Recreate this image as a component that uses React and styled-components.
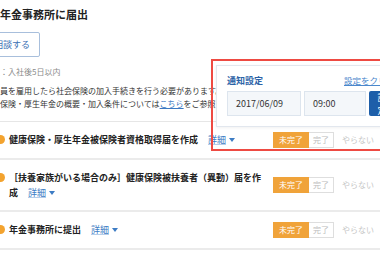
import React from "react";
import styled, { createGlobalStyle } from "styled-components";

const GlobalStyle = createGlobalStyle`
	html, body {
		margin: 0;
		padding: 0;
		width: 380px;
		height: 254px;
		overflow: hidden;
		background: #fff;
	}
	body {
		font-family: "Noto Sans CJK JP", "Noto Sans", sans-serif;
		color: #222;
	}
`;

const tasks = [
	{ id: 1, title: "健康保険・厚生年金被保険者資格取得届を作成" },
	{ id: 2, title: "［扶養家族がいる場合のみ］健康保険被扶養者（異動）届を作成" },
	{ id: 3, title: "年金事務所に提出" },
];

function App() {
	return (
		<>
			<GlobalStyle />
			<Page>
				<Header>
					<Title>年金事務所に届出</Title>
					<ConsultBtn>相談する</ConsultBtn>
					<Deadline>期限：入社後5日以内</Deadline>
					<Description>
						従業員を雇用したら社会保険の加入手続きを行う必要があります。
						<br />
						健康保険・厚生年金の概要・加入条件については
						<TextLink>こちら</TextLink>をご参照ください。
					</Description>
				</Header>
				<TaskList>
					{tasks.map((task) => (
						<TaskRow key={task.id}>
							<Dot />
							<TaskText>
								{task.title}
								<Detail>
									詳細
									<Caret width="6" height="4" viewBox="0 0 6 4">
										<path d="M0 0 L6 0 L3 4 Z" fill="#3d7cc4" />
									</Caret>
								</Detail>
							</TaskText>
							<StatusGroup>
								<StatusBtn active>未完了</StatusBtn>
								<StatusBtn>完了</StatusBtn>
								<SkipBtn>やらない</SkipBtn>
							</StatusGroup>
						</TaskRow>
					))}
				</TaskList>
				<Highlight>
					<Popover>
						<PopoverHead>
							<PopoverTitle>通知設定</PopoverTitle>
							<ClearLink>設定をクリア</ClearLink>
						</PopoverHead>
						<PopoverForm>
							<Field>2017/06/09</Field>
							<Field>09:00</Field>
							<SaveBtn>設定</SaveBtn>
						</PopoverForm>
					</Popover>
				</Highlight>
			</Page>
		</>
	);
}

const Page = styled.div`
	position: relative;
	width: 440px;
	margin-left: -16px;
`;
const Header = styled.section`
	padding-top: 6px;
	padding-bottom: 11px;
	border-bottom: 1px solid #e6e6e6;
`;
const Title = styled.h1`
	margin: 0;
	padding-left: 16px;
	font-size: 11px;
	line-height: 16px;
	font-weight: 700;
	color: #222;
`;
const ConsultBtn = styled.button`
	display: block;
	margin-top: 10px;
	height: 25px;
	padding: 0 9px;
	font-family: inherit;
	font-size: 9px;
	color: #3b70b3;
	background: #fff;
	border: 1px solid #a8bfdc;
	border-radius: 2px;
`;
const Deadline = styled.p`
	margin: 9px 0 0;
	font-size: 8px;
	line-height: 12px;
	color: #8a8a8a;
`;
const Description = styled.p`
	margin: 6px 0 0;
	font-size: 8px;
	line-height: 13px;
	color: #333;
`;
const TextLink = styled.a`
	color: #3b78c2;
	text-decoration: underline;
`;
const TaskList = styled.ul`
	margin: 0;
	padding: 0;
	list-style: none;
`;
const TaskRow = styled.li`
	display: flex;
	align-items: flex-start;
	gap: 8px;
	padding: 10px 0 10px 12px;
	border-bottom: 2px solid #ebebeb;
`;
const Dot = styled.span`
	flex: none;
	width: 9px;
	height: 9px;
	margin: 3px -4px 0 0;
	border-radius: 50%;
	background: #f3a32f;
`;
const TaskText = styled.div`
	flex: none;
	width: 256px;
	font-size: 9px;
	line-height: 15px;
	font-weight: 700;
	color: #222;
`;
const Detail = styled.a`
	margin-left: 10px;
	font-weight: 400;
	color: #3d7cc4;
	text-decoration: underline;
	text-decoration-color: #b5cde9;
	white-space: nowrap;
`;
const Caret = styled.svg`
	margin-left: 3px;
	vertical-align: 1px;
`;
const StatusGroup = styled.div`
	display: flex;
	align-items: center;
	align-self: center;
`;
const StatusBtn = styled.span`
	height: 16px;
	padding: 0 ${(p) => (p.active ? "5px" : "4px")};
	box-sizing: border-box;
	font-size: 8px;
	line-height: 14px;
	color: ${(p) => (p.active ? "#fff" : "#bdbdbd")};
	background: ${(p) => (p.active ? "#f0a33a" : "#fff")};
	border: 1px solid ${(p) => (p.active ? "#f0a33a" : "#dedede")};
	border-left-width: ${(p) => (p.active ? "1px" : "0")};
`;
const SkipBtn = styled.span`
	margin-left: 8px;
	font-size: 8px;
	line-height: 16px;
	color: #c6c6c6;
`;
const Highlight = styled.div`
	position: absolute;
	left: 227px;
	top: 59px;
	width: 230px;
	height: 92px;
	box-sizing: border-box;
	padding: 4px 0 0 3px;
	border: 2px solid #ee4a42;
`;
const Popover = styled.div`
	width: 190px;
	box-sizing: border-box;
	padding: 8px 10px 10px;
	background: #fff;
	border: 1px solid #e2e7ee;
	box-shadow: 0 1px 3px rgba(0, 0, 0, 0.06);
`;
const PopoverHead = styled.div`
	display: flex;
	justify-content: space-between;
	align-items: center;
	height: 12px;
`;
const PopoverTitle = styled.span`
	font-size: 9px;
	font-weight: 700;
	color: #2b62a6;
`;
const ClearLink = styled.a`
	font-size: 8.5px;
	color: #4a87cc;
	text-decoration: underline;
`;
const PopoverForm = styled.div`
	display: grid;
	grid-template-columns: 74px 62px 1fr;
	gap: 3px;
	margin-top: 5px;
`;
const Field = styled.div`
	height: 25px;
	box-sizing: border-box;
	padding-left: 8px;
	font-size: 9px;
	line-height: 23px;
	color: #333;
	background: #f4f7fa;
	border: 1px solid #dde5ee;
`;
const SaveBtn = styled.button`
	height: 25px;
	padding: 0 6px;
	font-family: inherit;
	font-size: 9px;
	color: #fff;
	background: #1d5ea9;
	border: none;
	border-radius: 2px;
`;

export default App;
